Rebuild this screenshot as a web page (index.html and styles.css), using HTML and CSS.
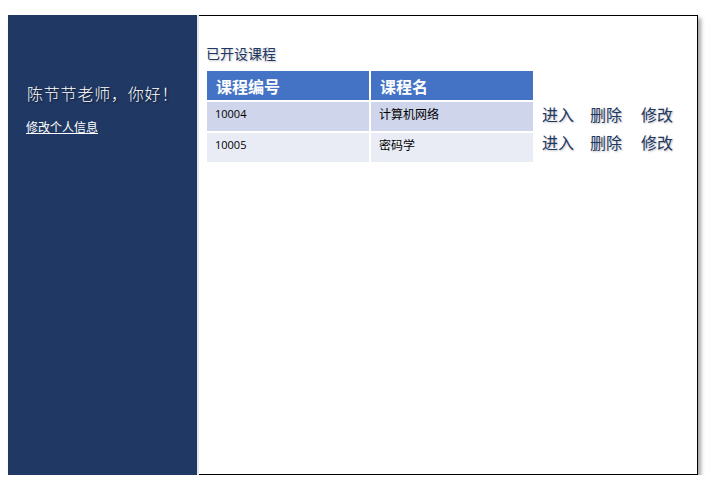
FILE: index.html
```html
<!DOCTYPE html>
<html lang="zh-CN">
<head>
    <meta charset="UTF-8">
    <meta name="viewport" content="width=device-width, initial-scale=1.0">
    <title>教师主页</title>
    <link rel="stylesheet" href="styles.css">
</head>
<body>
    <div class="frame">
        <div class="sidebar">
            <p class="greeting">陈节节老师，你好！</p>
            <a href="#" class="profile-link">修改个人信息</a>
        </div>

        <div class="main">
            <h2 class="section-title">已开设课程</h2>
            <div class="course-area">
                <table class="course-table">
                    <thead>
                        <tr>
                            <th>课程编号</th>
                            <th>课程名</th>
                        </tr>
                    </thead>
                    <tbody>
                        <tr class="row-odd">
                            <td class="num">10004</td>
                            <td>计算机网络</td>
                        </tr>
                        <tr class="row-even">
                            <td class="num">10005</td>
                            <td>密码学</td>
                        </tr>
                    </tbody>
                </table>
                <div class="actions">
                    <div class="action-row">
                        <a href="#">进入</a>
                        <a href="#">删除</a>
                        <a href="#">修改</a>
                    </div>
                    <div class="action-row">
                        <a href="#">进入</a>
                        <a href="#">删除</a>
                        <a href="#">修改</a>
                    </div>
                </div>
            </div>
        </div>
    </div>
</body>
</html>
```

FILE: styles.css
```css
body {
    margin: 0;
    background: #fff;
    font-family: "Noto Sans CJK SC", "Liberation Sans", sans-serif;
    color: #1f3864;
}

.frame {
    display: flex;
    width: 690px;
    height: 460px;
    margin: 15px 0 0 8px;
    box-sizing: border-box;
    border-top: 1px solid #000;
    border-right: 1px solid #000;
    border-bottom: 1px solid #000;
    box-shadow: 3px 3px 4px rgba(0,0,0,0.35);
}

.sidebar {
    width: 191px;
    margin-top: -1px;
    margin-bottom: -1px;
    background: #203864;
    padding: 68px 0 0 19px;
    box-sizing: border-box;
    border-right: 2px solid #e4e6ea;
}

.greeting {
    margin: 0;
    color: #fff;
    font-size: 16px;
    line-height: 20px;
    letter-spacing: 0.8px;
    font-weight: 300;
    text-shadow: 1px 1px 2px rgba(0,0,0,0.6);
}

.profile-link {
    display: inline-block;
    margin-top: 16px;
    margin-left: -1px;
    color: #fff;
    font-size: 12px;
    line-height: 16px;
    text-decoration: underline;
}

.main {
    flex: 1;
    padding: 27px 0 0 7px;
}

.section-title {
    margin: 0 0 8px;
    font-size: 14px;
    line-height: 20px;
    font-weight: normal;
    color: #1f3864;
    text-shadow: 1px 1px 2px rgba(0,0,0,0.25);
}

.course-area {
    display: flex;
    align-items: flex-start;
}

.course-table {
    border-collapse: separate;
    border-spacing: 2px;
    margin: -2px 0 0 -1px;
}

.course-table th {
    width: 153px;
    height: 29px;
    padding: 0 0 0 9px;
    background: #4472c4;
    color: #fff;
    font-size: 16px;
    font-weight: bold;
    text-align: left;
}

.course-table td {
    height: 29px;
    padding: 4px 0 0 8px;
    box-sizing: border-box;
    vertical-align: top;
    font-size: 12px;
    line-height: 16px;
    color: #000;
}

.course-table td.num {
    font-family: "Open Sans", "Liberation Sans", sans-serif;
    font-size: 11px;
}

.row-odd td {
    background: #cfd5ea;
}

.row-even td {
    background: #e9ebf5;
}

.actions {
    margin-left: 7px;
    padding-top: 29px;
}

.action-row {
    display: flex;
    height: 28px;
    align-items: center;
}

.action-row a {
    margin-right: 16px;
    color: #1f3864;
    font-size: 16px;
    text-decoration: none;
    text-shadow: 1px 1px 2px rgba(0,0,0,0.25);
}

.action-row a:nth-child(2) {
    margin-right: 19px;
}
```
